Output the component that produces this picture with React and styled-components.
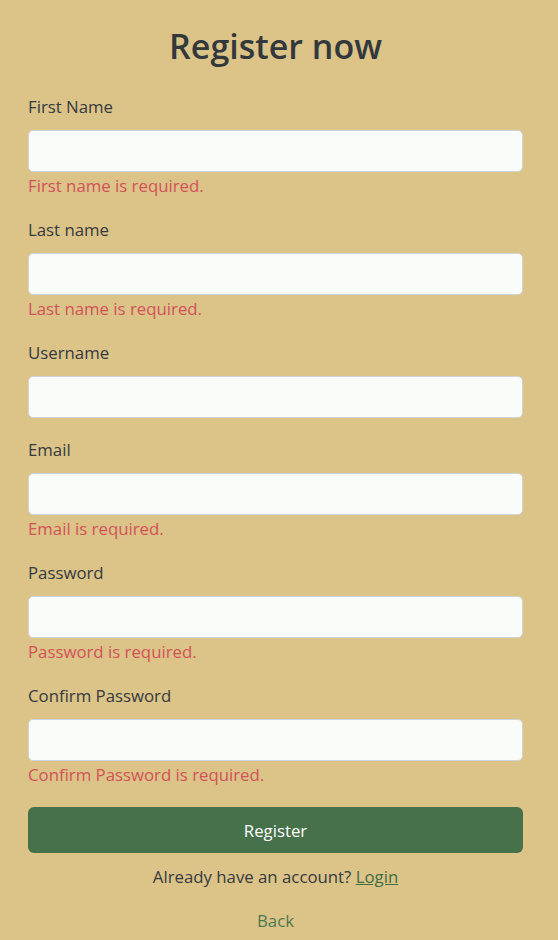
import React from "react";
import styled, { createGlobalStyle } from "styled-components";

const Global = createGlobalStyle`
  html, body { margin: 0; padding: 0; background: #dcc387; }
  body { font-family: "Open Sans", "Noto Sans", sans-serif; color: #343a40; }
  * { box-sizing: border-box; }
`;

const Page = styled.div`
  width: 558px;
  min-height: 940px;
  background: #dcc387;
  padding: 22px 35px 0 28px;
`;

const Form = styled.form`
  width: 495px;
  display: flex;
  flex-direction: column;
`;

const Title = styled.h1`
  margin: 0 0 25px;
  font-size: 34px;
  line-height: 48px;
  font-weight: 600;
  text-align: center;
  color: #33383c;
`;

const Group = styled.div`
  display: flex;
  flex-direction: column;
  margin-bottom: 20px;
`;

const Label = styled.label`
  font-size: 16.8px;
  line-height: 24px;
  margin-bottom: 11px;
  color: #343a40;
`;

const Input = styled.input`
  height: 42px;
  width: 100%;
  border: 1px solid #ced4da;
  border-radius: 5px;
  background: #fafcfa;
  padding: 6px 12px;
  font-family: inherit;
  font-size: 16.8px;
  outline: none;
`;

const Error = styled.div`
  margin-top: 2px;
  font-size: 16.8px;
  line-height: 24px;
  color: #d2525a;
`;

const Button = styled.button`
  height: 46px;
  width: 100%;
  border: none;
  border-radius: 6px;
  background: #46714a;
  color: #ffffff;
  font-family: inherit;
  font-size: 16.8px;
  cursor: pointer;
`;

const Note = styled.p`
  margin: 12px 0 0;
  text-align: center;
  font-size: 16.8px;
  line-height: 24px;
  color: #343a40;
`;

const LoginLink = styled.a`
  color: #3f6e46;
  text-decoration: underline;
`;

const BackLink = styled.a`
  margin-top: 20px;
  align-self: center;
  font-size: 16.8px;
  line-height: 24px;
  color: #4b7a50;
  text-decoration: none;
`;

const fields = [
  { label: "First Name", error: "First name is required." },
  { label: "Last name", error: "Last name is required." },
  { label: "Username" },
  { label: "Email", error: "Email is required." },
  { label: "Password", error: "Password is required.", type: "password" },
  { label: "Confirm Password", error: "Confirm Password is required.", type: "password" },
];

export default function App() {
  return (
    <Page>
      <Global />
      <Form onSubmit={(e) => e.preventDefault()}>
        <Title>Register now</Title>
        {fields.map((f) => (
          <Group key={f.label}>
            <Label>{f.label}</Label>
            <Input type={f.type || "text"} />
            {f.error && <Error>{f.error}</Error>}
          </Group>
        ))}
        <Button type="submit">Register</Button>
        <Note>
          Already have an account? <LoginLink href="#">Login</LoginLink>
        </Note>
        <BackLink href="#">Back</BackLink>
      </Form>
    </Page>
  );
}
